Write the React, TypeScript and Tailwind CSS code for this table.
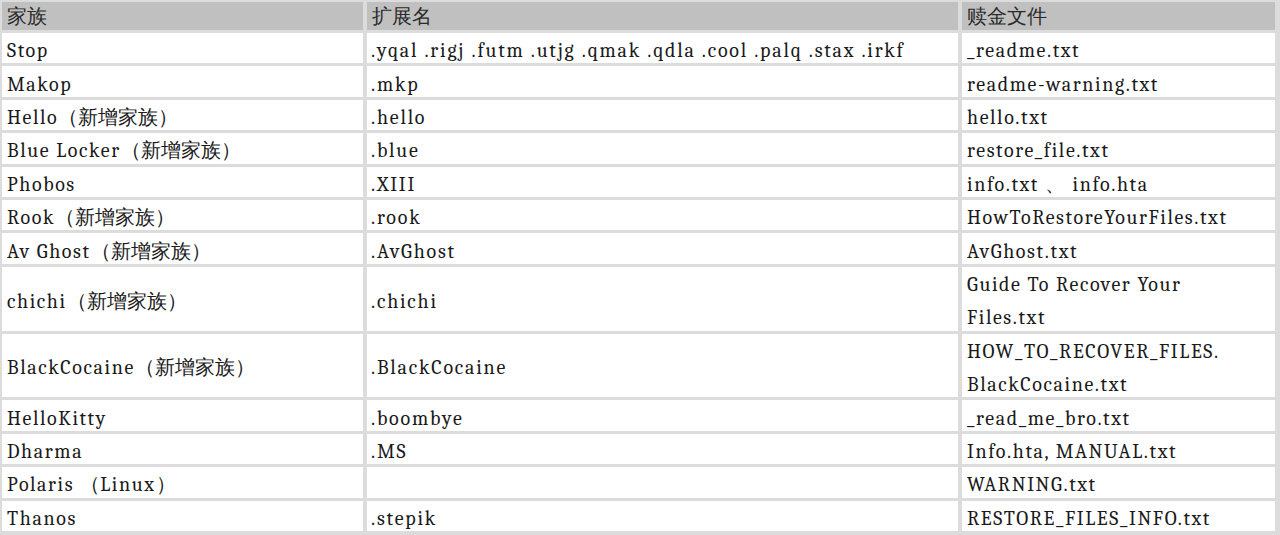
import React from "react";

type Row = { a: string; b: string; c: string | string[]; double?: boolean };

const rows: Row[] = [
  { a: "Stop", b: ".yqal .rigj .futm .utjg .qmak .qdla .cool .palq .stax .irkf", c: "_readme.txt" },
  { a: "Makop", b: ".mkp", c: "readme-warning.txt" },
  { a: "Hello（新增家族）", b: ".hello", c: "hello.txt" },
  { a: "Blue Locker（新增家族）", b: ".blue", c: "restore_file.txt" },
  { a: "Phobos", b: ".XIII", c: "info.txt 、 info.hta" },
  { a: "Rook（新增家族）", b: ".rook", c: "HowToRestoreYourFiles.txt" },
  { a: "Av Ghost（新增家族）", b: ".AvGhost", c: "AvGhost.txt" },
  { a: "chichi（新增家族）", b: ".chichi", c: ["Guide To Recover Your", "Files.txt"], double: true },
  { a: "BlackCocaine（新增家族）", b: ".BlackCocaine", c: ["HOW_TO_RECOVER_FILES.", "BlackCocaine.txt"], double: true },
  { a: "HelloKitty", b: ".boombye", c: "_read_me_bro.txt" },
  { a: "Dharma", b: ".MS", c: "Info.hta, MANUAL.txt" },
  { a: "Polaris （Linux）", b: "", c: "WARNING.txt" },
  { a: "Thanos", b: ".stepik", c: "RESTORE_FILES_INFO.txt" },
];

const CJK = /[\u3000-\u9fff\uff00-\uffef]/;

function Txt({ s }: { s: string }) {
  const parts = s.split(/([\u3000-\u9fff\uff00-\uffef]+)/);
  return (
    <>
      {parts.map((p, i) =>
        CJK.test(p) ? (
          <span key={i} className="tracking-normal">{p}</span>
        ) : (
          <span key={i}>{p}</span>
        )
      )}
    </>
  );
}

export default function App() {
  return (
    <div className="w-[1280px] h-[535px] bg-[#dcdcdc] pt-[2px] pl-[2px] pr-[5px] overflow-hidden text-[#1a1a1a] text-[20px] tracking-[1.6px] font-serif">
      <div className="grid grid-cols-[361px_591px_313px] gap-x-[4px] gap-y-[3px]">
        {["家族", "扩展名", "赎金文件"].map((h) => (
          <div key={h} className="h-[28px] bg-[#c0c0c0] pl-[5px] pt-[1px] leading-[28px] tracking-normal text-[#2a2a2a]">
            {h}
          </div>
        ))}
        {rows.map((r, i) => {
          const h = r.double ? "h-[63.8px]" : "h-[30.4px]";
          return (
            <React.Fragment key={i}>
              <div className={`${h} bg-white pl-[5px] flex items-center pt-[6px] whitespace-pre`}>
                <Txt s={r.a} />
              </div>
              <div className={`${h} bg-white pl-[4px] flex items-center pt-[6px] whitespace-pre tracking-[1.8px]`}>
                {r.b}
              </div>
              {Array.isArray(r.c) ? (
                <div className={`${h} bg-white pl-[5px] leading-[33.4px] whitespace-pre`}>
                  <div className="mt-[1px]">
                    {r.c.map((l, j) => (
                      <div key={j}>{l}</div>
                    ))}
                  </div>
                </div>
              ) : (
                <div className={`${h} bg-white pl-[5px] flex items-center pt-[6px] whitespace-pre`}>
                  {r.c}
                </div>
              )}
            </React.Fragment>
          );
        })}
      </div>
    </div>
  );
}
